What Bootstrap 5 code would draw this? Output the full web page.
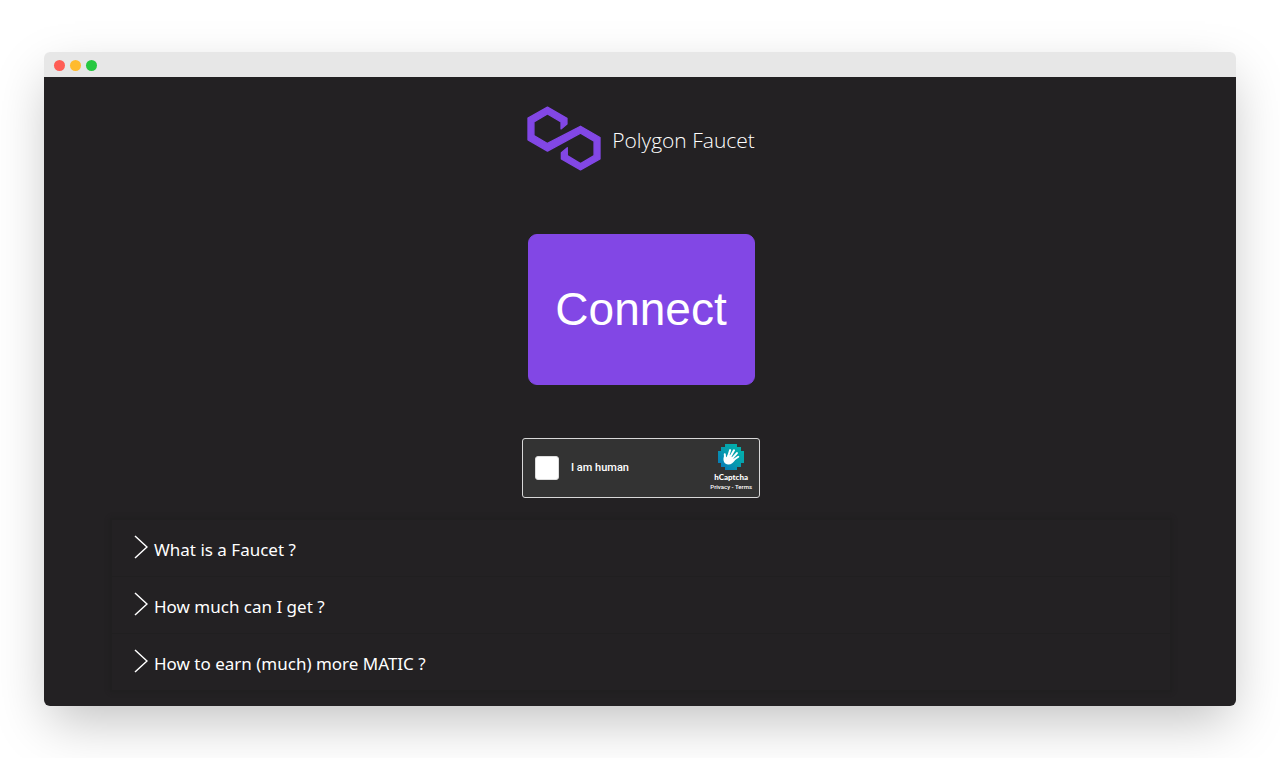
<!DOCTYPE html>
<html lang="en">
<head>
<meta charset="utf-8">
<meta name="viewport" content="width=device-width, initial-scale=1">
<title>Polygon Faucet</title>
<link href="https://cdn.jsdelivr.net/npm/bootstrap@5.3.0/dist/css/bootstrap.min.css" rel="stylesheet">
<style>
  body { background: #fff; padding: 52px 44px; font-family: "Open Sans", "Noto Sans", sans-serif; }
  .window { border-radius: 6px; box-shadow: 0 20px 50px -6px rgba(0,0,0,.25); }
  .titlebar { background: #e7e7e7; height: 25px; padding: 1px 10px 0; gap: 5px; }
  .dot { width: 11px; height: 11px; }
  .dot-close { background: #ff5d55; }
  .dot-min { background: #ffbb2e; }
  .dot-max { background: #27c840; }
  .content { background: #232123; padding: 29px 64px 14px 66px; }
  .brand { gap: 11px; }
  .brand-name { font-size: 21px; line-height: 28px; font-weight: 300; padding-top: 2px; }
  .btn-connect { --bs-btn-bg: #8247e5; --bs-btn-border-color: #8247e5; --bs-btn-color: #fff;
    --bs-btn-hover-bg: #7339d6; --bs-btn-hover-color: #fff; --bs-btn-active-bg: #672fc6; --bs-btn-active-color: #fff;
    width: 227px; height: 151px; border-radius: 9px; margin-top: 63px;
    font-family: "Liberation Sans", Arial, sans-serif; font-size: 46px; }
  .captcha { width: 238px; height: 60px; margin-top: 53px; padding: 0 7px 0 12px; background: #333; border: 1px solid #d8d8d8; border-radius: 3px;
    font-family: Roboto, "Liberation Sans", sans-serif; }
  .captcha .form-check-input { width: 24px; height: 24px; border: 1px solid #ddd; border-radius: 3px; background-color: #fff; }
  .captcha .form-check-input:checked { background-color: #8247e5; }
  .captcha-label { font-size: 11px; font-weight: 500; margin-left: 12px; }
  .captcha-name { font-family: Lato, sans-serif; font-size: 8px; line-height: 10px; font-weight: 900; margin-top: 2px; }
  .captcha-links { font-size: 6px; line-height: 10px; font-weight: 500; }
  .faq { margin-top: 20px; border: 2px solid #201f20; box-shadow: 0 0 4px #201f20; font-family: "Noto Sans", "Open Sans", sans-serif; }
  .faq-item + .faq-item { border-top: 1px solid #201f20; }
  .faq-button { height: 56px; padding: 0 22px; gap: 6px; font-size: 17px; line-height: 24px; }
  .faq-button svg { margin-bottom: 2px; }
  .faq-button span { padding-top: 3px; }
</style>
</head>
<body>
<div class="window overflow-hidden text-white">
  <div class="titlebar d-flex align-items-center">
    <span class="dot dot-close rounded-circle"></span>
    <span class="dot dot-min rounded-circle"></span>
    <span class="dot dot-max rounded-circle"></span>
  </div>
  <main class="content d-flex flex-column align-items-center">
    <header class="brand d-flex align-items-center">
      <svg width="74" height="65" viewBox="-1 -1 224 196" aria-hidden="true">
        <path fill="#8247e5" stroke="#8247e5" stroke-width="4" stroke-linejoin="round" d="M61 2L120 36V53L102 68V47L61 23L20 47V88L61 112L161 60L220 94V159L161 192L103 159V140L121 125V149L161 173L202 149V105L161 81L61 135L2 101V35Z"/>
      </svg>
      <h1 class="brand-name mb-0">Polygon Faucet</h1>
    </header>
    <button type="button" class="btn btn-connect p-0">Connect</button>
    <div class="captcha d-flex align-items-center">
      <input class="form-check-input m-0" type="checkbox" id="human">
      <label class="captcha-label" for="human">I am human</label>
      <div class="d-flex flex-column align-items-center ms-auto">
        <svg width="26" height="26" viewBox="0 0 26 26" aria-hidden="true">
          <defs><linearGradient id="teal" x1="1" y1="0" x2="0" y2="1"><stop offset="0" stop-color="#00b8a9"/><stop offset=".5" stop-color="#079cae"/><stop offset="1" stop-color="#0871ba"/></linearGradient></defs>
          <path fill="url(#teal)" d="M7 0h12v3h4v4h3v12h-3v4h-4v3H7v-3H3v-4H0V7h3V3h4z"/>
          <g transform="rotate(14 13 13)">
          <path fill="none" stroke="#fff" stroke-width="2" stroke-linecap="round" d="M8 17L6.300 11.800M10 14L10.500 6.500M12 14L14.300 5.800M14 15L17.800 7.800M15.500 16L20 11"/>
          <path fill="#fff" d="M6 12.500l2.500 2L10 11l7 3.500 1-1c-1 4-3 7-6 7.500-3.500.5-5.500-2-6-5z"/>
          </g>
        </svg>
        <div class="captcha-name">hCaptcha</div>
        <div class="captcha-links"><a href="#" class="text-reset text-decoration-none">Privacy</a> - <a href="#" class="text-reset text-decoration-none">Terms</a></div>
      </div>
    </div>
    <section class="faq w-100" aria-label="Questions">
      <div class="faq-item">
        <button type="button" class="faq-button btn text-white text-start border-0 w-100 d-flex align-items-center" aria-expanded="false">
          <svg width="14" height="24" viewBox="0 0 14 24" fill="none" stroke="#fff" stroke-width="1.500" aria-hidden="true"><path d="M1 1l12 11L1 23"/></svg>
          <span>What is a Faucet ?</span>
        </button>
      </div>
      <div class="faq-item">
        <button type="button" class="faq-button btn text-white text-start border-0 w-100 d-flex align-items-center" aria-expanded="false">
          <svg width="14" height="24" viewBox="0 0 14 24" fill="none" stroke="#fff" stroke-width="1.500" aria-hidden="true"><path d="M1 1l12 11L1 23"/></svg>
          <span>How much can I get ?</span>
        </button>
      </div>
      <div class="faq-item">
        <button type="button" class="faq-button btn text-white text-start border-0 w-100 d-flex align-items-center" aria-expanded="false">
          <svg width="14" height="24" viewBox="0 0 14 24" fill="none" stroke="#fff" stroke-width="1.500" aria-hidden="true"><path d="M1 1l12 11L1 23"/></svg>
          <span>How to earn (much) more MATIC ?</span>
        </button>
      </div>
    </section>
  </main>
</div>
<script src="https://cdn.jsdelivr.net/npm/bootstrap@5.3.0/dist/js/bootstrap.bundle.min.js"></script>
</body>
</html>
